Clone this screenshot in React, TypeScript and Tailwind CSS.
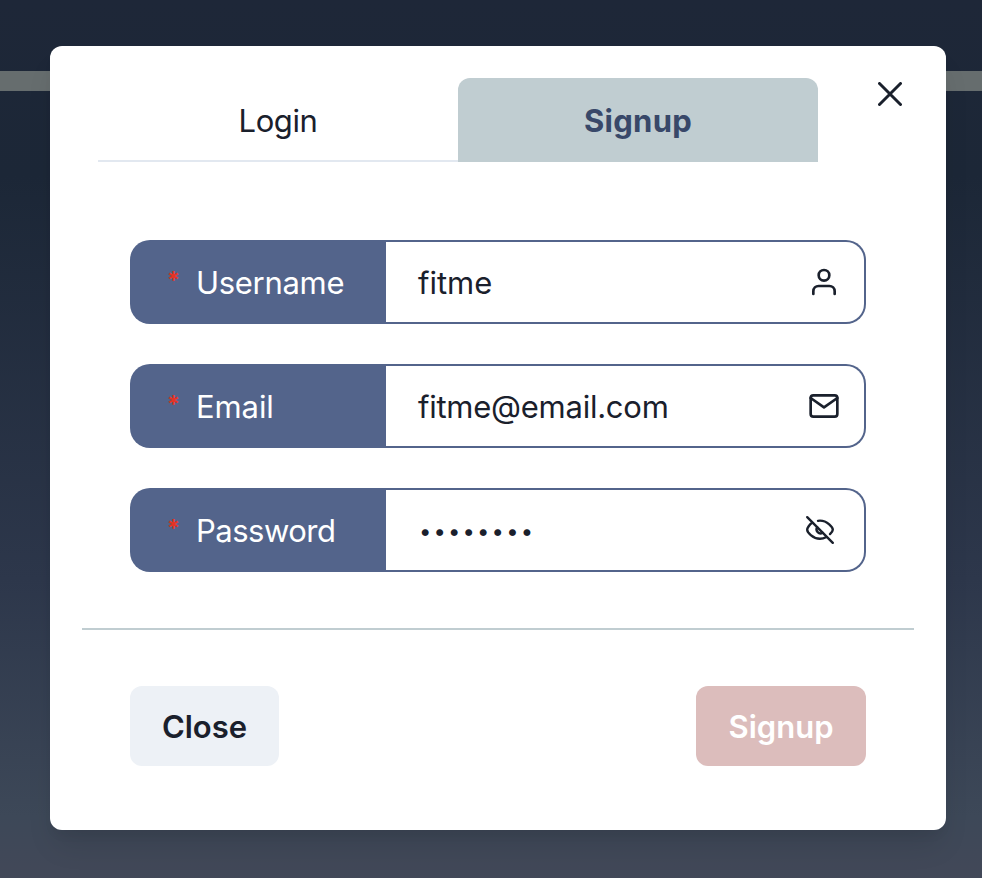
import type { ReactNode } from "react";

function UserIcon() {
  return (
    <svg width="32" height="32" viewBox="0 0 24 24" fill="none" stroke="currentColor" strokeWidth="2" strokeLinecap="round" strokeLinejoin="round">
      <path d="M20 21v-2a4 4 0 0 0-4-4H8a4 4 0 0 0-4 4v2" />
      <circle cx="12" cy="7" r="4" />
    </svg>
  );
}

function MailIcon() {
  return (
    <svg width="32" height="32" viewBox="0 0 24 24" fill="none" stroke="currentColor" strokeWidth="2" strokeLinecap="round" strokeLinejoin="round">
      <path d="M4 4h16c1.1 0 2 .9 2 2v12c0 1.1-.9 2-2 2H4c-1.1 0-2-.9-2-2V6c0-1.1.9-2 2-2z" />
      <polyline points="22,6 12,13 2,6" />
    </svg>
  );
}

function EyeOffIcon() {
  return (
    <svg width="32" height="32" viewBox="0 0 32 32" fill="none" stroke="currentColor" strokeWidth="2.4" strokeLinecap="round" strokeLinejoin="round">
      <path d="M3.200 3.200 28.800 28.800" />
      <path d="M8.2 8.8C5.5 10.500 3.200 14 3.200 15.700 3.200 18 8.5 24.800 16 24.800c2.300 0 4.300-.6 6-1.500" />
      <path d="M14 6.800c.8-.2 1.400-.2 2-.2 7.500 0 12.800 6.900 12.800 9.100 0 1-1.200 2.800-2.800 4.400" />
      <path d="M13.200 13.200a4 4 0 0 0 5.400 5.600" />
    </svg>
  );
}

type FieldProps = {
  label: string;
  labelClass: string;
  value: string;
  valueClass: string;
  icon: ReactNode;
  iconClass?: string;
};

function Field({ label, labelClass, value, valueClass, icon, iconClass = "" }: FieldProps) {
  return (
    <div className="flex h-[84px] rounded-[20px] bg-[#53648b] p-[2px]">
      <label className="flex w-[254px] items-center pl-[35px] text-white">
        <span className="w-[29px] pb-[2px] text-[24px] leading-none font-semibold text-[#e53325]">*</span>
        <span className={`pt-[1px] ${labelClass}`}>{label}</span>
      </label>
      <div className="flex flex-1 items-center justify-between rounded-r-[18px] bg-white pr-6 pl-8">
        <span className={valueClass}>{value}</span>
        <span className={iconClass}>{icon}</span>
      </div>
    </div>
  );
}

export default function App() {
  return (
    <div className="relative h-[878px] w-[982px] overflow-hidden bg-[linear-gradient(180deg,#1e2738_0%,#1c2737_20%,#2d374b_66%,#3d4858_93%,#424858_100%)] pt-[46px] pl-[50px] font-['Inter',sans-serif] text-[31px] leading-[48px] text-[#1a202c]">
      <div className="absolute top-[71px] left-0 h-5 w-full bg-[#666d6e]" />
      <main className="relative h-[784px] w-[896px] rounded-xl bg-white shadow-[0_20px_30px_-6px_rgba(0,0,0,0.1),0_8px_12px_-4px_rgba(0,0,0,0.05)]">
        <header className="flex pt-8 pl-12">
          <div className="flex h-[84px] w-[360px] items-center justify-center border-b-2 border-[#e2e8f0] pt-[3px] tracking-[-0.4px]">Login</div>
          <div className="flex h-[84px] w-[360px] items-center justify-center rounded-t-xl bg-[#c0cdd1] pt-[1px] font-bold tracking-[0.3px] text-[#384869]">Signup</div>
          <button aria-label="Dismiss" className="ml-[60px] h-6 pt-1">
            <svg width="24" height="24" viewBox="0 0 24 24" fill="none" stroke="currentColor" strokeWidth="3" strokeLinecap="round">
              <path d="M1.500 1.500 22.500 22.500M22.500 1.500 1.500 22.500" />
            </svg>
          </button>
        </header>
        <form className="mt-[78px] flex flex-col gap-10 px-20">
          <Field label="Username" labelClass="tracking-[-0.3px]" value="fitme" valueClass="pt-[1px]" icon={<UserIcon />} />
          <Field label="Email" labelClass="tracking-[-0.1px]" value="fitme@email.com" valueClass="pt-[1px] tracking-[-0.25px]" icon={<MailIcon />} />
          <Field label="Password" labelClass="tracking-[-0.5px]" value="••••••••" valueClass="pt-[1px] pl-[1px] text-[22px] tracking-[2.15px]" icon={<EyeOffIcon />} iconClass="pr-1" />
        </form>
        <hr className="mx-8 mt-14 border-t-2 border-[#c0cdd1]" />
        <footer className="mt-14 flex justify-between px-20 font-semibold">
          <button className="h-20 w-[149px] rounded-xl bg-[#edf1f6] pt-[1px]">Close</button>
          <button className="h-20 w-[170px] rounded-xl bg-[#dcbdbc] pt-[1px] text-white">Signup</button>
        </footer>
      </main>
    </div>
  );
}
